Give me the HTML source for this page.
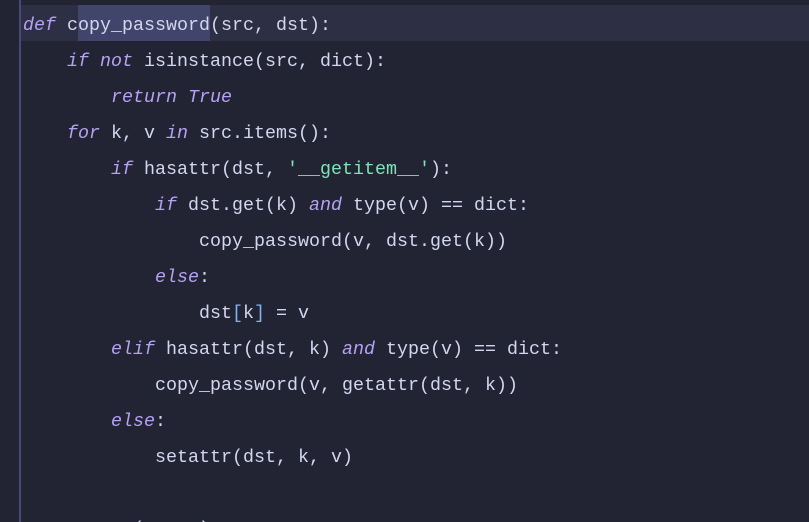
<!DOCTYPE html>
<html><head><style>
html,body{margin:0;padding:0;width:809px;height:522px;overflow:hidden;background:#222333;}
.wrap{position:relative;width:809px;height:522px;overflow:hidden;}
.gut{position:absolute;left:19px;top:0;width:2px;height:522px;background:#474a78;}
.hl{position:absolute;left:21px;top:5px;width:788px;height:36px;background:#2d2f44;}
.sel{position:absolute;left:78px;top:5px;width:132px;height:36px;background:#42456b;}
pre{position:absolute;left:23px;top:8px;margin:0;font-family:"Liberation Mono",monospace;font-size:18.33px;line-height:36px;color:#d2d6ee;}
i{color:#b5a2f5;font-style:italic;}
.s{color:#7fe3b5;}
.b{color:#7fb4f0;}
</style></head><body><div class="wrap">
<div class="hl"></div><div class="sel"></div><div class="gut"></div>
<pre><i>def</i> copy_password(src, dst):
    <i>if</i> <i>not</i> isinstance(src, dict):
        <i>return</i> <i>True</i>
    <i>for</i> k, v <i>in</i> src.items():
        <i>if</i> hasattr(dst, <span class="s">'__getitem__'</span>):
            <i>if</i> dst.get(k) <i>and</i> type(v) == dict:
                copy_password(v, dst.get(k))
            <i>else</i>:
                dst<span class="b">[</span>k<span class="b">]</span> = v
        <i>elif</i> hasattr(dst, k) <i>and</i> type(v) == dict:
            copy_password(v, getattr(dst, k))
        <i>else</i>:
            setattr(dst, k, v)

          (     )</pre>
</div></body></html>
